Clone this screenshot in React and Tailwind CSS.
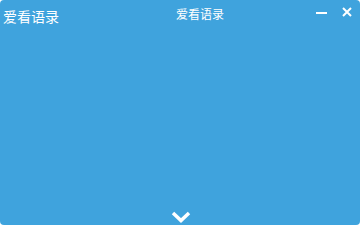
export default function App() {
  return (
    <div className="w-[360px] h-[225px] bg-white">
      <div
        className="relative w-full h-full rounded-[4px] bg-[#3fa3dd] flex flex-col text-white"
        style={{ fontFamily: '"Noto Sans CJK SC", "Noto Sans", sans-serif' }}
      >
        <div className="flex items-start h-[30px]">
          <div className="pl-[3px] pt-[6px] text-[14px] leading-[20px] w-[120px]">爱看语录</div>
          <div className="flex-1 text-center pl-[40px] pt-[5px] text-[12px] leading-[18px]">爱看语录</div>
          <div className="w-[120px] flex justify-end items-start pt-[7px] pr-[8px] gap-[15px]">
            <svg width="11" height="10" viewBox="0 0 11 10">
              <rect x="0" y="5" width="11" height="2" fill="white" />
            </svg>
            <svg width="10" height="10" viewBox="0 0 10 10">
              <path d="M1 1 L9 9 M9 1 L1 9" stroke="white" strokeWidth="2" />
            </svg>
          </div>
        </div>
        <div className="flex-1" />
        <div className="flex justify-center pb-[2px] pl-[1px]">
          <svg width="20" height="12" viewBox="0 0 20 12">
            <path d="M2 2 L10 9.5 L18 2" stroke="white" strokeWidth="3.5" fill="none" />
          </svg>
        </div>
      </div>
    </div>
  );
}
